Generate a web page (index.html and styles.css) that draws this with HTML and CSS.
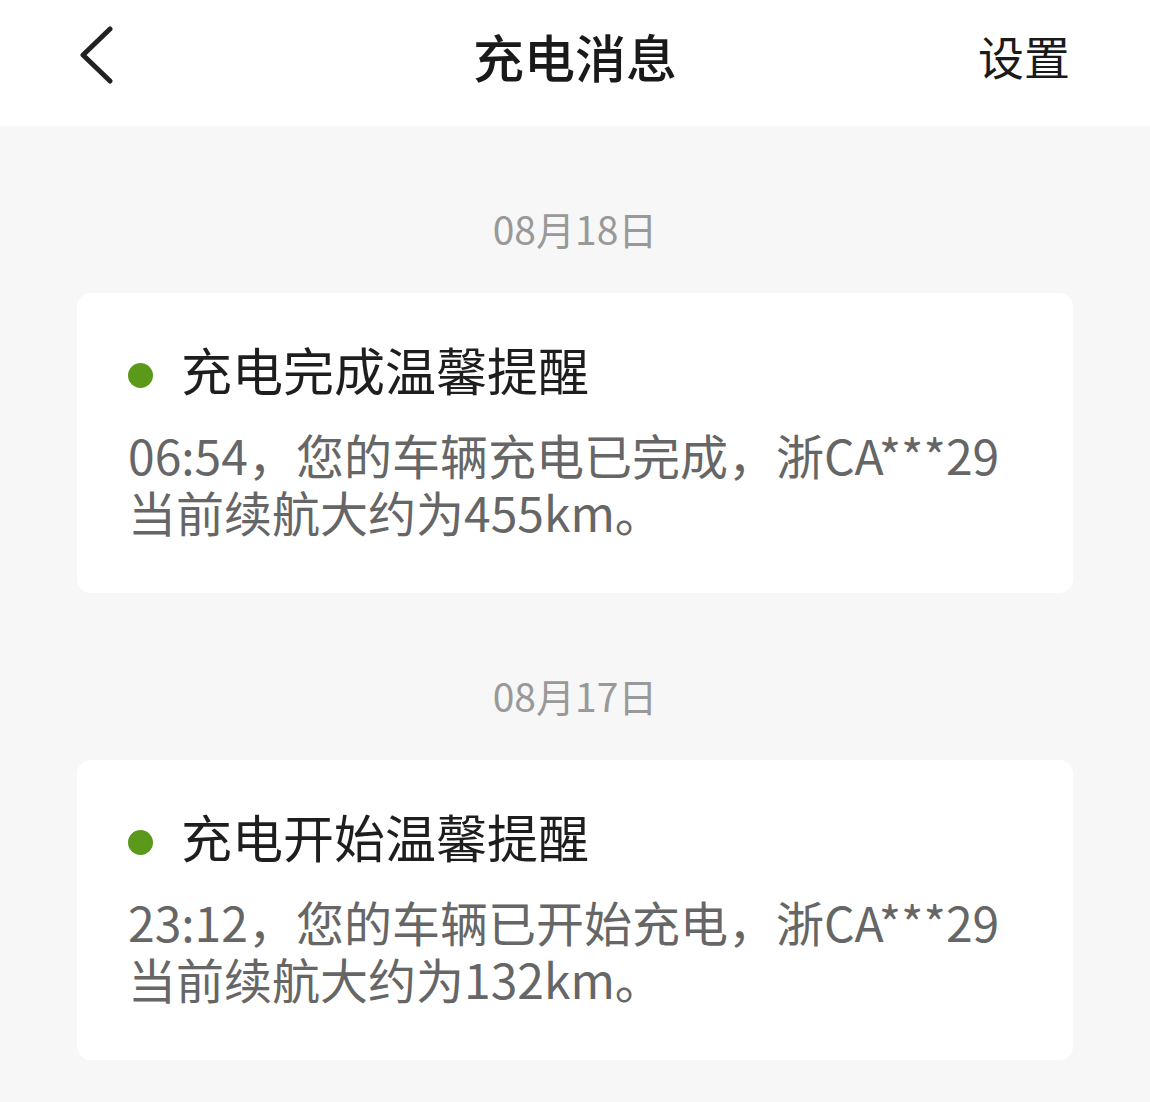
FILE: index.html
```html
<!DOCTYPE html>
<html lang="zh">
<head>
<meta charset="utf-8">
<link rel="stylesheet" href="styles.css">
</head>
<body>
<header class="topbar">
  <div class="back">
    <svg width="36" height="58" viewBox="0 0 36 58"><path d="M32 3 L5 29 L32 55" fill="none" stroke="#222" stroke-width="5" stroke-linecap="round" stroke-linejoin="round"/></svg>
  </div>
  <h1 class="title">充电消息</h1>
  <div class="settings">设置</div>
</header>
<main class="list">
  <section class="group">
    <div class="date">08月18日</div>
    <div class="card">
      <div class="card-title"><span class="dot"></span>充电完成温馨提醒</div>
      <p class="card-body">06:54，您的车辆充电已完成，浙CA***29<br>当前续航大约为455km。</p>
    </div>
  </section>
  <section class="group">
    <div class="date">08月17日</div>
    <div class="card">
      <div class="card-title"><span class="dot"></span>充电开始温馨提醒</div>
      <p class="card-body">23:12，您的车辆已开始充电，浙CA***29<br>当前续航大约为132km。</p>
    </div>
  </section>
</main>
</body>
</html>
```
FILE: styles.css
```css
html, body {
  margin: 0;
  padding: 0;
  background: #f7f7f7;
  font-family: "Noto Sans CJK SC", "Noto Sans", sans-serif;
}
.topbar {
  height: 126px;
  background: #fff;
  display: flex;
  align-items: center;
  justify-content: space-between;
  padding: 0 80px 0 78px;
  position: relative;
}
.back {
  width: 36px;
  height: 58px;
  display: flex;
  margin-top: -16px;
}
.title {
  position: absolute;
  left: 0;
  right: 0;
  top: 0;
  margin: 0;
  text-align: center;
  font-size: 51px;
  font-weight: 500;
  color: #1a1a1a;
  line-height: 112px;
  pointer-events: none;
}
.settings {
  font-size: 46px;
  color: #1a1a1a;
  line-height: 110px;
  align-self: flex-start;
}
.list {
  display: flex;
  flex-direction: column;
  padding: 0 77px;
}
.group {
  display: flex;
  flex-direction: column;
}
.date {
  margin-top: 77px;
  height: 50px;
  line-height: 50px;
  text-align: center;
  font-size: 39px;
  color: #999;
}
.card {
  margin-top: 40px;
  background: #fff;
  border-radius: 14px;
  padding: 51px 30px 50px 51px;
  height: 300px;
  box-sizing: border-box;
}
.card-title {
  display: flex;
  align-items: center;
  font-size: 51px;
  line-height: 60px;
  color: #1e1e1e;
  margin-top: -5px;
  margin-left: -1px;
}
.dot {
  width: 25px;
  height: 25px;
  border-radius: 50%;
  background: #5a991a;
  margin-right: 28px;
  margin-left: 1px;
  margin-top: 12px;
}
.card-body {
  margin: 27px 0 0;
  font-size: 48px;
  line-height: 57px;
  color: #666;
  white-space: nowrap;
}
```
